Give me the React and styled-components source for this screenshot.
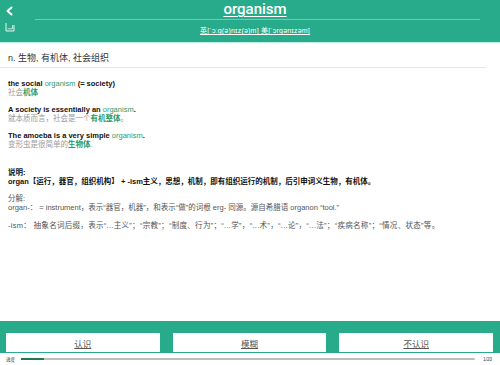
import React from 'react';
import styled, { createGlobalStyle } from 'styled-components';

const GREEN = '#27ab8b';
const TEXT_GREEN = '#2f9a68';

const GlobalStyle = createGlobalStyle`
  html, body {
    margin: 0;
    padding: 0;
    background: #ffffff;
  }
  body {
    font-family: "Liberation Sans", "Noto Sans CJK SC", sans-serif;
    color: #222;
  }
`;

const Page = styled.div`
  width: 500px;
  height: 365px;
  display: flex;
  flex-direction: column;
  overflow: hidden;
  background: #fff;
`;

const Header = styled.header`
  height: 42px;
  background: ${GREEN};
  border-bottom: 1px solid #bff0e6;
  display: grid;
  grid-template-columns: 30px 1fr 20px;
`;

const SideIcons = styled.div`
  display: flex;
  flex-direction: column;
  align-items: flex-start;
  padding: 6px 0 0 5px;
  gap: 6px;
`;

const HeaderMain = styled.div`
  display: flex;
  flex-direction: column;
  align-items: center;
`;

const Word = styled.h1`
  margin: 0;
  height: 18px;
  font-family: Roboto, "Liberation Sans", sans-serif;
  font-size: 15px;
  line-height: 18px;
  font-weight: 500;
  color: #fff;
  text-decoration: underline;
  text-decoration-thickness: 1px;
  text-underline-offset: 2px;
`;

const HeaderRule = styled.div`
  align-self: stretch;
  height: 1px;
  margin: 1px 0 0 5px;
  background: rgba(255, 255, 255, 0.35);
`;

const Phonetic = styled.div`
  margin-top: 5px;
  font-size: 7px;
  color: #fff;
  text-decoration: underline;
  letter-spacing: 0.2px;
`;

const Body = styled.main`
  flex: 1;
  display: flex;
  flex-direction: column;
`;

const Definition = styled.div`
  padding: 9px 8px 0;
  height: 15px;
  font-size: 9px;
  line-height: 12px;
  color: #333;
  border-bottom: 1px solid #e4e4e4;
  margin-right: 14px;
`;

const Examples = styled.section`
  padding: 11px 8px 0;
  display: flex;
  flex-direction: column;
  gap: 8px;
`;

const Example = styled.div`
  display: flex;
  flex-direction: column;
  font-size: 7.5px;
  line-height: 9px;
`;

const En = styled.div`
  color: #111;
  font-weight: 600;
`;

const Zh = styled.div`
  color: #9a9a9a;
`;

const Hl = styled.span`
  color: ${TEXT_GREEN};
  font-weight: ${p => (p.$bold ? 700 : 400)};
`;

const Notes = styled.section`
  padding: 19px 8px 0;
  display: flex;
  flex-direction: column;
  font-size: 7.5px;
  line-height: 9px;
`;

const NoteBlock = styled.div`
  margin-bottom: ${p => p.$gap || 0}px;
  color: ${p => (p.$strong ? '#111' : '#555')};
  font-weight: ${p => (p.$strong ? 700 : 400)};
  letter-spacing: ${p => (p.$wide ? '0.3px' : '0')};
`;

const Footer = styled.footer`
  background: ${GREEN};
  margin-top: auto;
  padding: 12px 7px 1px 6px;
  display: grid;
  grid-template-columns: repeat(3, 1fr);
  gap: 13px;
`;

const ActionButton = styled.button`
  height: 19px;
  border: none;
  background: #fff;
  font-family: "Noto Sans CJK SC", sans-serif;
  font-size: 8.5px;
  color: #555;
  text-decoration: underline;
  padding: 0;
  cursor: pointer;
`;

const Progress = styled.div`
  height: 12px;
  display: flex;
  align-items: center;
  padding: 0 8px 0 6px;
  gap: 6px;
  font-size: 4.5px;
  color: #333;
`;

const Track = styled.div`
  flex: 1;
  height: 2.5px;
  background: #bdbdbd;
  border-radius: 1px;
  margin-right: 2px;
`;

const Fill = styled.div`
  height: 100%;
  background: #1f7a4f;
`;

const examples = [
  {
    en: ['the social ', 'organism', ' (= society)'],
    zh: ['社会', '机体', ''],
  },
  {
    en: ['A society is essentially an ', 'organism', '.'],
    zh: ['就本质而言，社会是一个', '有机整体', '。'],
  },
  {
    en: ['The amoeba is a very simple ', 'organism', '.'],
    zh: ['变形虫是很简单的', '生物体', '.'],
  },
];

const BackIcon = () => (
  <svg width="9" height="10" viewBox="0 0 9 10">
    <path d="M6.5 1.5 L2.5 5 L6.5 8.5" stroke="#fff" strokeWidth="2" fill="none" strokeLinecap="round" strokeLinejoin="round" />
  </svg>
);

const NoteIcon = () => (
  <svg width="10" height="10" viewBox="0 0 10 10">
    <path d="M1 1 V9 H9 V3" stroke="#e6f7f2" strokeWidth="1" fill="none" />
    <path d="M2.5 6.8 H7.5 V3.2" stroke="#e6f7f2" strokeWidth="0.8" fill="none" />
  </svg>
);

const App = () => {
  const current = 1;
  const total = 20;

  return (
    <Page>
      <GlobalStyle />
      <Header>
        <SideIcons>
          <BackIcon />
          <NoteIcon />
        </SideIcons>
        <HeaderMain>
          <Word>organism</Word>
          <HeaderRule />
          <Phonetic>英[ˈɔːɡ(ə)nɪz(ə)m]  美[ˈɔrɡənɪzəm]</Phonetic>
        </HeaderMain>
        <div />
      </Header>

      <Body>
        <Definition>n. 生物, 有机体, 社会组织</Definition>

        <Examples>
          {examples.map((ex, i) => (
            <Example key={i}>
              <En>
                {ex.en[0]}
                <Hl>{ex.en[1]}</Hl>
                {ex.en[2]}
              </En>
              <Zh>
                {ex.zh[0]}
                <Hl $bold>{ex.zh[1]}</Hl>
                {ex.zh[2]}
              </Zh>
            </Example>
          ))}
        </Examples>

        <Notes>
          <NoteBlock $strong>说明:</NoteBlock>
          <NoteBlock $strong $gap={8}>
            organ【运行，器官，组织机构】 + -ism主义，思想，机制，即有组织运行的机制，后引申词义生物，有机体。
          </NoteBlock>
          <NoteBlock>分解:</NoteBlock>
          <NoteBlock $gap={9}>
            organ-： = instrument，表示“器官，机器”，和表示“做”的词根 erg- 同源。源自希腊语 organon “tool.”
          </NoteBlock>
          <NoteBlock $wide>
            -ism： 抽象名词后缀，表示“...主义”；“宗教”；“制度、行为”；“...学”，“...术”，“...论”，“...法”；“疾病名称”；“情况、状态”等。
          </NoteBlock>
        </Notes>
      </Body>

      <Footer>
        <ActionButton>认识</ActionButton>
        <ActionButton>模糊</ActionButton>
        <ActionButton>不认识</ActionButton>
      </Footer>
      <Progress>
        <span>进度</span>
        <Track>
          <Fill style={{ width: `${(current / total) * 100}%` }} />
        </Track>
        <span>{current}/{total}</span>
      </Progress>
    </Page>
  );
};

export default App;
